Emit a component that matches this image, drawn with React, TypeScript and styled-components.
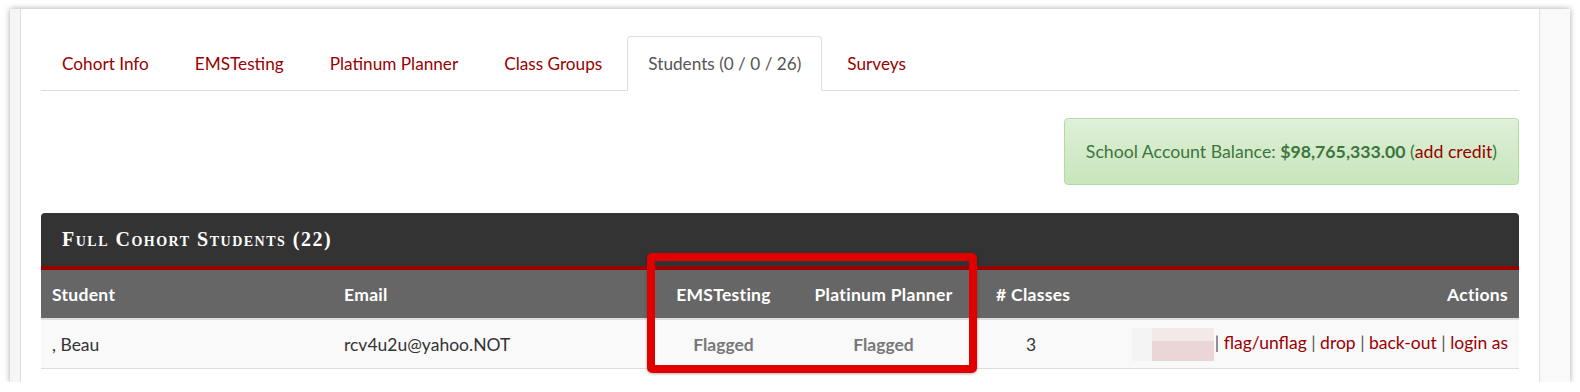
import React from "react";
import styled, { createGlobalStyle } from "styled-components";

const GlobalStyles = createGlobalStyle`
  html, body {
    margin: 0;
    background: #fff;
  }
  body {
    font-family: Lato, "Open Sans", sans-serif;
    color: #333;
  }
`;

const COLUMNS = "292px 332px 117px 203px 92px 1fr";

const tabs = [
  "Cohort Info",
  "EMSTesting",
  "Platinum Planner",
  "Class Groups",
  "Students (0 / 0 / 26)",
  "Surveys",
];

export default function App() {
  return (
    <>
      <GlobalStyles />
      <Frame>
        <LeftGutter />
        <Main>
          <TabBar>
            {tabs.map((t) => (
              <Tab key={t} $active={t.startsWith("Students")}>
                {t}
              </Tab>
            ))}
          </TabBar>

          <BalanceRow>
            <Balance>
              School Account Balance:&nbsp;<strong>$98,765,333.00</strong>&nbsp;(
              <Link>add credit</Link>)
            </Balance>
          </BalanceRow>

          <Panel>
            <PanelTitle>Full Cohort Students (22)</PanelTitle>
            <HeadRow>
              <Cell>Student</Cell>
              <Cell>Email</Cell>
              <Cell $align="center">EMSTesting</Cell>
              <Cell $align="center">Platinum Planner</Cell>
              <Cell $align="center"># Classes</Cell>
              <Cell $align="right">Actions</Cell>
            </HeadRow>
            <BodyRow>
              <Cell>, Beau</Cell>
              <Cell>rcv4u2u@yahoo.NOT</Cell>
              <Cell $align="center">
                <Flag>Flagged</Flag>
              </Cell>
              <Cell $align="center">
                <Flag>Flagged</Flag>
              </Cell>
              <Cell $align="center">3</Cell>
              <Cell $align="right">
                <Blurred />
                <Sep>|</Sep> <Link>flag/unflag</Link> <Sep>|</Sep>{" "}
                <Link>drop</Link> <Sep>|</Sep> <Link>back-out</Link>{" "}
                <Sep>|</Sep> <Link>login as</Link>
              </Cell>
            </BodyRow>
            <Highlight />
          </Panel>
        </Main>
        <RightGutter />
      </Frame>
    </>
  );
}

const Frame = styled.div`
  margin: 9px 10px 0;
  height: 373px;
  display: flex;
  box-shadow: 0 0 6px rgba(0, 0, 0, 0.35);
`;

const LeftGutter = styled.div`
  width: 10px;
  background: #f6f6f6;
  border-right: 1px solid #dcdcdc;
`;

const RightGutter = styled.div`
  width: 30px;
  background: #f9f9f9;
`;

const Main = styled.div`
  flex: 1;
  background: #fff;
  padding: 27px 20px 0;
  border-right: 1px solid #e2e2e2;
`;

const TabBar = styled.ul`
  display: flex;
  gap: 4px;
  margin: 0;
  padding: 0;
  list-style: none;
  height: 54px;
  border-bottom: 1px solid #ddd;
`;

const Tab = styled.li<{ $active?: boolean }>`
  box-sizing: border-box;
  height: 55px;
  padding: 0 20px 1px;
  display: flex;
  align-items: center;
  font-size: 17.2px;
  color: ${({ $active }) => ($active ? "#555" : "#990000")};
  background: ${({ $active }) => ($active ? "#fff" : "transparent")};
  border: 1px solid ${({ $active }) => ($active ? "#ddd" : "transparent")};
  border-bottom-color: ${({ $active }) => ($active ? "#fff" : "transparent")};
  border-radius: 4px 4px 0 0;
`;

const BalanceRow = styled.div`
  display: flex;
  justify-content: flex-end;
  margin-top: 27px;
`;

const Balance = styled.div`
  box-sizing: border-box;
  height: 67px;
  padding: 0 21px;
  display: flex;
  align-items: center;
  font-size: 17.7px;
  color: #3c763d;
  background: linear-gradient(#dff0d8, #c8e5bc);
  border: 1px solid #b2dba1;
  border-radius: 4px;
  box-shadow: inset 0 1px 0 rgba(255, 255, 255, 0.25);

  strong {
    font-weight: 700;
  }
`;

const Link = styled.span`
  color: #990000;
`;

const Panel = styled.div`
  position: relative;
  margin-top: 28px;
`;

const PanelTitle = styled.div`
  height: 53px;
  padding: 0 21px;
  display: flex;
  align-items: center;
  background: #333;
  border-bottom: 4px solid #990000;
  border-radius: 4px 4px 0 0;
  color: #fff;
  font-family: "Liberation Serif", serif;
  font-weight: 700;
  font-variant: small-caps;
  font-size: 20px;
  letter-spacing: 1.5px;
`;

const HeadRow = styled.div`
  display: grid;
  grid-template-columns: ${COLUMNS};
  align-items: center;
  height: 48px;
  background: #666;
  border-bottom: 2px solid #ddd;
  color: #fff;
  font-weight: 700;
  font-size: 17.5px;
  letter-spacing: 0.3px;
`;

const BodyRow = styled.div`
  display: grid;
  grid-template-columns: ${COLUMNS};
  align-items: center;
  height: 48px;
  background: #f9f9f9;
  border-bottom: 1px solid #ddd;
  font-size: 17.5px;
`;

const Cell = styled.div<{ $align?: "left" | "center" | "right" }>`
  padding: 0 11px;
  text-align: ${({ $align }) => $align || "left"};
  white-space: nowrap;
`;

const Flag = styled.span`
  color: #777;
  font-weight: 700;
`;

const Sep = styled.span`
  color: #555;
`;

const Blurred = styled.span`
  display: inline-block;
  vertical-align: middle;
  width: 82px;
  height: 33px;
  margin-right: 1px;
  background: linear-gradient(90deg, #f4f4f4 0 20px, transparent 20px),
    linear-gradient(#f3e9e9 0 13px, #ead6d6 13px);
`;

const Highlight = styled.div`
  position: absolute;
  left: 606px;
  top: 40px;
  width: 330px;
  height: 120px;
  box-sizing: border-box;
  border: 8px solid #e00000;
  border-radius: 5px;
  box-shadow: 0 1px 3px rgba(0, 0, 0, 0.3);
  pointer-events: none;
`;
